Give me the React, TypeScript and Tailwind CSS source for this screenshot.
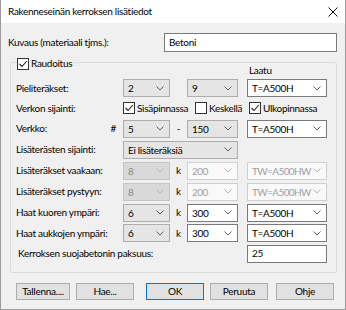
import React from 'react';

const font = "font-['Lato',sans-serif]";

function Chevron({ color = '#606060' }: { color?: string }) {
    return (
        <svg width="8" height="5" viewBox="0 0 8 5" className="shrink-0">
            <polyline points="0.5,0.5 4,4 7.5,0.5" fill="none" stroke={color} strokeWidth="1" />
        </svg>
    );
}

type Kind = 'list' | 'edit' | 'dlist' | 'dedit';

function Combo({ value, kind, className }: { value: string; kind: Kind; className: string }) {
    const styles: Record<Kind, string> = {
        list: 'bg-[#e5e5e5] border-[#adadad] text-black',
        edit: 'bg-white border-[#7a7a7a] text-black',
        dlist: 'bg-[#d9d9d9] border-[#c4c4c4] text-[#8a8a8a]',
        dedit: 'bg-[#f9f9f9] border-[#d0d0d0] text-[#a0a0a0] tracking-[-0.6px]',
    };
    const disabled = kind === 'dlist' || kind === 'dedit';
    return (
        <div className={`h-[18px] border flex items-center justify-between pl-[4px] pr-[5px] ${styles[kind]} ${className}`}>
            <span className="leading-none whitespace-nowrap">{value}</span>
            <Chevron color={disabled ? '#b5b5b5' : '#606060'} />
        </div>
    );
}

function Check({ checked, label }: { checked: boolean; label: string }) {
    return (
        <div className="flex items-center gap-[2px] whitespace-nowrap">
            <div className="w-[12px] h-[12px] shrink-0 border border-[#333333] bg-white flex items-center justify-center">
                {checked && (
                    <svg width="10" height="10" viewBox="0 0 10 10">
                        <polyline points="1.5,5 4,7.5 8.8,2" fill="none" stroke="#222" strokeWidth="1.1" />
                    </svg>
                )}
            </div>
            <span>{label}</span>
        </div>
    );
}

function Row({ label, h, children }: { label: React.ReactNode; h: string; children?: React.ReactNode }) {
    return (
        <div className={`flex items-center ${h}`}>
            <div className="w-[107px] shrink-0 flex justify-between pr-[7px] whitespace-nowrap">{label}</div>
            {children}
        </div>
    );
}

function Sep({ c }: { c: string }) {
    return <div className="w-[17px] shrink-0 flex justify-center">{c}</div>;
}

function Btn({ text, className }: { text: string; className: string }) {
    return (
        <div className={`h-[17px] bg-[#e1e1e1] border flex items-center justify-center ${className}`}>
            {text}
        </div>
    );
}

export default function App() {
    return (
        <div className={`w-[346px] h-[310px] bg-[#f0f0f0] border-x border-b border-[#9c9c9c] text-[10px] tracking-[-0.3px] text-black ${font} flex flex-col`}>
            {/* Title bar */}
            <div className="h-[23px] bg-white flex items-center justify-between pl-[7px] pr-[7px]">
                <span>Rakenneseinän kerroksen lisätiedot</span>
                <svg width="10" height="10" viewBox="0 0 10 10">
                    <path d="M0.5 0.5 L9.5 9.5 M9.5 0.5 L0.5 9.5" stroke="#111" strokeWidth="1" />
                </svg>
            </div>

            <div className="pl-[7px] flex flex-col">
                {/* Kuvaus */}
                <div className="mt-[10px] h-[19px] flex items-center">
                    <div className="w-[156px]">Kuvaus (materiaali tjms.):</div>
                    <div className="w-[173px] h-[19px] bg-white border border-[#7a7a7a] flex items-center pl-[4px]">Betoni</div>
                </div>

                {/* Group */}
                <div className="relative mt-[10px] ml-[2px] w-[327px] border border-[#dcdcdc] rounded-[2px] pl-[5px] pb-[8px]">
                    <div className="absolute -top-[7px] left-[6px] bg-[#f0f0f0] pr-[2px]">
                        <Check checked label="Raudoitus" />
                    </div>

                    <div className="h-[15px] flex items-center">
                        <div className="w-[233px]" />
                        <span>Laatu</span>
                    </div>

                    <Row label="Pieliteräkset:" h="h-[20px]">
                        <Combo value="2" kind="list" className="w-[47px]" />
                        <Sep c="" />
                        <Combo value="9" kind="list" className="w-[51px]" />
                        <div className="w-[9px]" />
                        <Combo value="T=A500H" kind="edit" className="w-[80px]" />
                    </Row>

                    <Row label="Verkon sijainti:" h="h-[20px]">
                        <div className="w-[72px]"><Check checked label="Sisäpinnassa" /></div>
                        <div className="w-[54px]"><Check checked={false} label="Keskellä" /></div>
                        <Check checked label="Ulkopinnassa" />
                    </Row>

                    <Row label={<><span>Verkko:</span><span>#</span></>} h="h-[21px]">
                        <Combo value="5" kind="list" className="w-[47px]" />
                        <Sep c="-" />
                        <Combo value="150" kind="list" className="w-[51px]" />
                        <div className="w-[9px]" />
                        <Combo value="T=A500H" kind="edit" className="w-[80px]" />
                    </Row>

                    <Row label="Lisäterästen sijainti:" h="h-[21px]">
                        <Combo value="Ei lisäteräksiä" kind="list" className="w-[115px]" />
                    </Row>

                    <Row label="Lisäteräkset vaakaan:" h="h-[21px]">
                        <Combo value="8" kind="dlist" className="w-[47px]" />
                        <Sep c="k" />
                        <Combo value="200" kind="dedit" className="w-[51px]" />
                        <div className="w-[9px]" />
                        <Combo value="TW=A500HW" kind="dedit" className="w-[80px]" />
                    </Row>

                    <Row label="Lisäteräkset pystyyn:" h="h-[21px]">
                        <Combo value="8" kind="dlist" className="w-[47px]" />
                        <Sep c="k" />
                        <Combo value="200" kind="dedit" className="w-[51px]" />
                        <div className="w-[9px]" />
                        <Combo value="TW=A500HW" kind="dedit" className="w-[80px]" />
                    </Row>

                    <Row label="Haat kuoren ympäri:" h="h-[21px]">
                        <Combo value="6" kind="list" className="w-[47px]" />
                        <Sep c="k" />
                        <Combo value="300" kind="edit" className="w-[51px]" />
                        <div className="w-[9px]" />
                        <Combo value="T=A500H" kind="edit" className="w-[80px]" />
                    </Row>

                    <Row label="Haat aukkojen ympäri:" h="h-[20px]">
                        <Combo value="6" kind="list" className="w-[47px]" />
                        <Sep c="k" />
                        <Combo value="300" kind="edit" className="w-[51px]" />
                        <div className="w-[9px]" />
                        <Combo value="T=A500H" kind="edit" className="w-[80px]" />
                    </Row>

                    <div className="h-[21px] flex items-center">
                        <div className="w-[231px] pl-[2px]">Kerroksen suojabetonin paksuus:</div>
                        <div className="w-[80px] h-[18px] bg-white border border-[#7a7a7a] flex items-center pl-[4px]">25</div>
                    </div>
                </div>

                {/* Buttons */}
                <div className="mt-[10px] flex">
                    <Btn text="Tallenna...." className="ml-[8px] w-[54px] border-[#adadad]" />
                    <Btn text="Hae..." className="ml-[6px] w-[58px] border-[#adadad]" />
                    <Btn text="OK" className="ml-[12px] w-[58px] border-[#0078d7]" />
                    <Btn text="Peruuta" className="ml-[6px] w-[58px] border-[#adadad]" />
                    <Btn text="Ohje" className="ml-[8px] w-[58px] border-[#adadad]" />
                </div>
            </div>
        </div>
    );
}
